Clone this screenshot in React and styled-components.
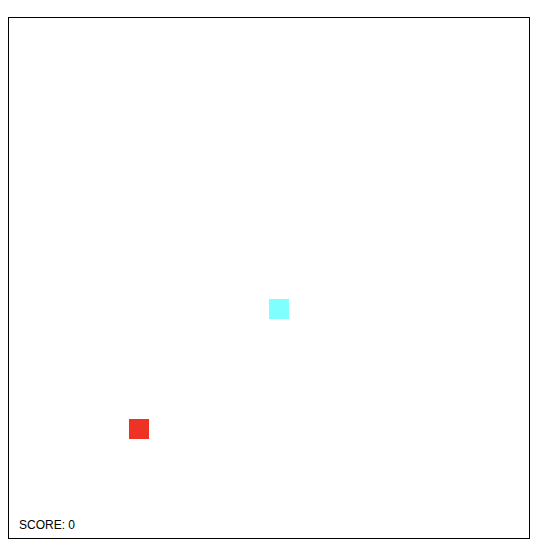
import React from "react";
import styled, { createGlobalStyle } from "styled-components";

const Global = createGlobalStyle`
  html, body { margin: 0; padding: 0; background: #fff; }
  body { padding: 8px; font-family: "Liberation Sans", Arial, sans-serif; }
`;

const Board = styled.div`
  position: relative;
  box-sizing: content-box;
  width: 520px;
  height: 520px;
  margin-top: 9px;
  border: 1px solid #000;
  display: flex;
  flex-direction: column;
  justify-content: flex-end;
  padding: 0;
`;

const Cell = styled.div`
  position: absolute;
  width: 20px;
  height: 20px;
  background: ${(p) => p.$color};
`;

const Score = styled.div`
  font-family: "Liberation Sans", Arial, sans-serif;
  font-size: 12px;
  line-height: 14px;
  color: #000;
  padding: 0 0 6px 10px;
`;

export default function App() {
  return (
    <>
      <Global />
      <Board>
        <Cell $color="#80ffff" style={{ left: 260, top: 281 }} />
        <Cell $color="#ee3324" style={{ left: 120, top: 401 }} />
        <Score>SCORE: 0</Score>
      </Board>
    </>
  );
}
